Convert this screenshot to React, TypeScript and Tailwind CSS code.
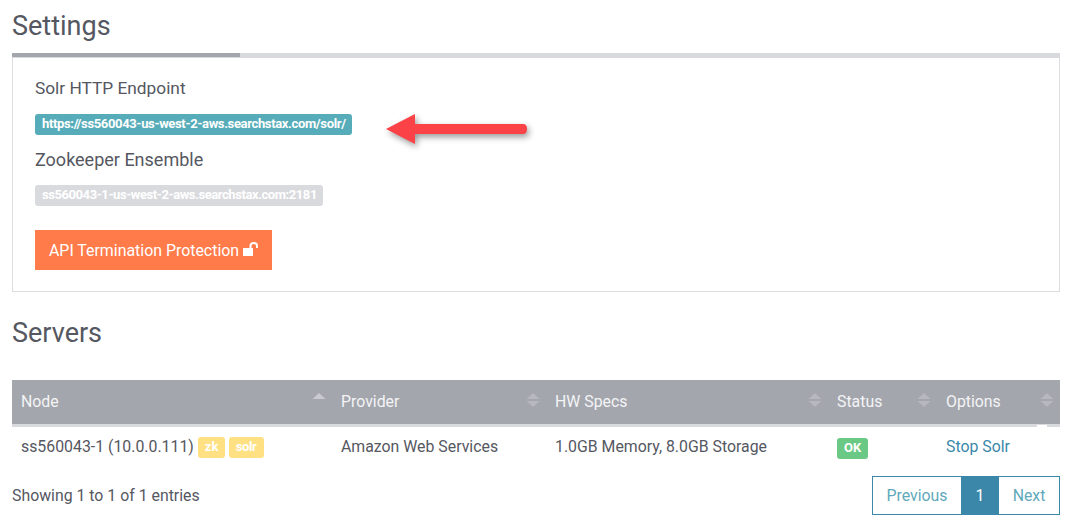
function Sort({ up, down }: { up: string; down: string }) {
  return (
    <svg width="14" height="15" viewBox="0 0 14 15" className="absolute right-[6px] top-[13px]">
      <path d="M7 0 L13.5 6 H0.5 Z" fill={up} />
      <path d="M7 14 L13.5 8 H0.5 Z" fill={down} />
    </svg>
  );
}

const heads = [
  { t: "Node", w: "w-[320px]", up: "#c9cbd0", down: "transparent" },
  { t: "Provider", w: "w-[214px]", up: "#b6b8bd", down: "#b6b8bd" },
  { t: "HW Specs", w: "w-[282px]", up: "#b6b8bd", down: "#b6b8bd" },
  { t: "Status", w: "w-[109px]", up: "#b6b8bd", down: "#b6b8bd" },
  { t: "Options", w: "w-[123px]", up: "#b6b8bd", down: "#b6b8bd" },
];

function Label({ children, className }: { children: React.ReactNode; className: string }) {
  return (
    <span className={`inline-block h-[21px] rounded-[3px] px-[7px] text-[13px] font-bold leading-[20px] text-white ${className}`}>
      {children}
    </span>
  );
}

export default function App() {
  return (
    <div className="h-[530px] w-[1078px] overflow-hidden bg-white pl-3 pr-[18px] font-['Roboto',sans-serif] text-[15.85px] text-[#555761]">
      <h1 className="h-[53px] pt-[9px] text-[27px] leading-[34px] text-[#555761]">Settings</h1>

      <div className="relative h-[239px] border-x border-b border-[#dcdde0] pl-[22px]">
        <div className="absolute -left-px right-[-1px] top-0 h-[5px] bg-[#d9dade]" />
        <div className="absolute -left-px top-0 h-[4px] w-[228px] bg-[#a4a6ad]" />
        <div className="pt-[24px] text-[17.3px] leading-[22px]">Solr HTTP Endpoint</div>
        <div className="mt-[15px] flex">
          <Label className="w-[317px] whitespace-nowrap bg-[#57acb9] tracking-[-0.35px]">https://ss560043-us-west-2-aws.searchstax.com/solr/</Label>
        </div>
        <div className="mt-[13px] text-[18px] leading-[24px]">Zookeeper Ensemble</div>
        <div className="mt-[13px] flex">
          <Label className="w-[288px] whitespace-nowrap bg-[#d9dade] tracking-[-0.43px]">ss560043-1-us-west-2-aws.searchstax.com:2181</Label>
        </div>
        <button className="mt-[24px] flex h-[40px] w-[237px] items-center whitespace-nowrap bg-[#ff7b4a] pl-[14px] pt-[2px] text-[15.9px] text-white">
          API Termination Protection
          <svg width="16" height="14" viewBox="0 0 16 14" className="ml-[4px] -translate-y-[2px]">
            <rect x="0" y="6" width="10" height="8" rx="0.5" fill="#fff" />
            <path d="M7.5 6V3.8C7.5 2 9 1 10.8 1S14 2 14 3.8V6" fill="none" stroke="#fff" strokeWidth="2" />
          </svg>
        </button>
        <svg width="142" height="30" viewBox="0 0 142 30" className="absolute left-[373px] top-[61px] overflow-visible drop-shadow-[2px_3px_3px_rgba(0,0,0,0.4)]">
          <path d="M0 15 L29 0 V10 H137 Q141 10 141 15 Q141 20 137 20 H29 V30 Z" fill="#fb4246" />
        </svg>
      </div>

      <h2 className="h-[88px] pt-[24px] text-[27px] leading-[34px]">Servers</h2>

      <table className="w-[1048px] table-fixed border-collapse">
        <thead>
          <tr className="h-[45px] bg-[#a4a6ad] text-left text-[#f3f4f6]">
            {heads.map((h) => (
              <th key={h.t} className={`relative border-b-[3px] border-[#d9dade] pl-[9px] font-normal ${h.w}`}>
                {h.t}
                <Sort up={h.up} down={h.down} />
                {h.t === "Options" && <span className="absolute bottom-[-3px] right-[13px] h-[2px] w-[10px] bg-white" />}
              </th>
            ))}
          </tr>
        </thead>
        <tbody>
          <tr className="h-[43px]">
            <td className="whitespace-nowrap pl-[9px]">
              ss560043-1 (10.0.0.111)
              <Label className="ml-[4px] w-[27px] bg-[#ffe082] align-[1px]">zk</Label>
              <Label className="ml-[4px] w-[35px] bg-[#ffe082] align-[1px] tracking-[-0.4px]">solr</Label>
            </td>
            <td className="pl-[9px]">Amazon Web Services</td>
            <td className="pl-[9px]">1.0GB Memory, 8.0GB Storage</td>
            <td className="pl-[9px]"><Label className="bg-[#6bc986]">OK</Label></td>
            <td className="pl-[9px] text-[#3b87a9]">Stop Solr</td>
          </tr>
        </tbody>
      </table>

      <div className="mt-[8px] flex items-start justify-between">
        <div className="pt-[9px] leading-[22px]">Showing 1 to 1 of 1 entries</div>
        <div className="flex h-[39px] border border-[#3b87a9] text-[#5fa9bb]">
          <span className="flex w-[88px] items-center justify-center">Previous</span>
          <span className="flex w-[38px] items-center justify-center bg-[#3b87a9] text-white">1</span>
          <span className="flex w-[60px] items-center justify-center">Next</span>
        </div>
      </div>
    </div>
  );
}
